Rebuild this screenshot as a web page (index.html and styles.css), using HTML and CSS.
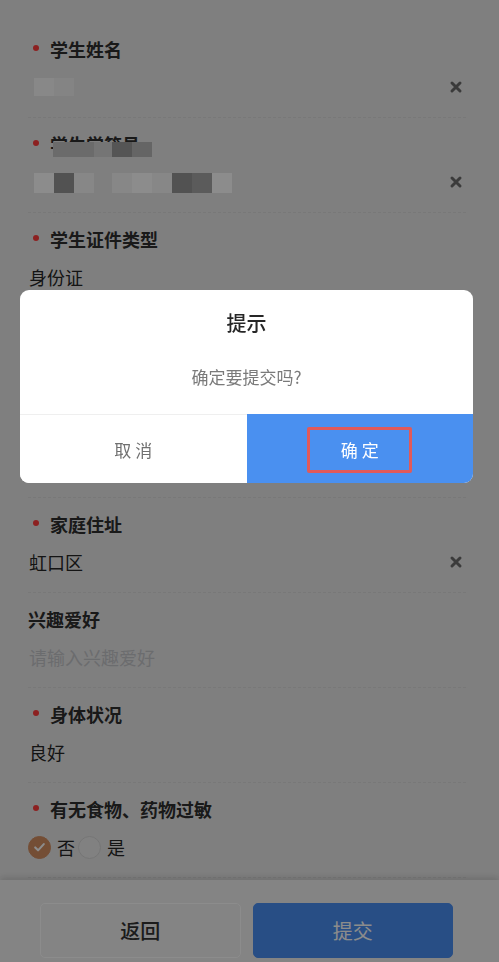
FILE: index.html
```html
<!DOCTYPE html>
<html lang="zh-CN">
<head>
<meta charset="utf-8">
<title>学生信息</title>
<link rel="stylesheet" href="styles.css">
</head>
<body>
<div class="page">
  <main class="form">
    <div class="field">
      <div class="label"><span class="req"><i></i></span>学生姓名</div>
      <div class="value">
        <span class="mosaic mosaic-sm"><i class="blk s1"></i><i class="blk s2"></i></span>
        <svg class="clear" viewBox="0 0 14 14"><path d="M3 3l8 8M11 3l-8 8"/></svg>
      </div>
    </div>
    <div class="field">
      <div class="label"><span class="req"><i></i></span><span class="redacted">学生学籍号<span class="mosaic mosaic-label"><i class="lb l1"></i><i class="lb l2"></i><i class="lb l3"></i><i class="lb l4"></i></span></span></div>
      <div class="value">
        <span class="mosaic mosaic-md">
          <i class="blk b1"></i><i class="blk bd"></i><i class="blk b2"></i><i class="gap"></i><i class="blk b2"></i><i class="blk b1"></i><i class="blk b2"></i><i class="blk bd"></i><i class="blk bd2"></i><i class="blk b1"></i>
        </span>
        <svg class="clear" viewBox="0 0 14 14"><path d="M3 3l8 8M11 3l-8 8"/></svg>
      </div>
    </div>
    <div class="field">
      <div class="label"><span class="req"><i></i></span>学生证件类型</div>
      <div class="value"><span class="text">身份证</span></div>
    </div>
    <div class="field">
      <div class="label"><span class="req"><i></i></span>学生证件号码</div>
      <div class="value"><span class="text">310109********0000</span></div>
    </div>
    <div class="field">
      <div class="label"><span class="req"><i></i></span>出生日期</div>
      <div class="value"><span class="text">2015-01-01</span></div>
    </div>
    <div class="field">
      <div class="label"><span class="req"><i></i></span>家庭住址</div>
      <div class="value">
        <span class="text">虹口区</span>
        <svg class="clear" viewBox="0 0 14 14"><path d="M3 3l8 8M11 3l-8 8"/></svg>
      </div>
    </div>
    <div class="field">
      <div class="label">兴趣爱好</div>
      <div class="value"><span class="text placeholder">请输入兴趣爱好</span></div>
    </div>
    <div class="field">
      <div class="label"><span class="req"><i></i></span>身体状况</div>
      <div class="value"><span class="text">良好</span></div>
    </div>
    <div class="field">
      <div class="label"><span class="req"><i></i></span>有无食物、药物过敏</div>
      <div class="value radios">
        <span class="radio">
          <span class="radio-icon checked"><svg viewBox="0 0 22 22"><path d="M6.5 11.5l3 3 6-6.5"/></svg></span>
          <span class="radio-label">否</span>
        </span>
        <span class="radio">
          <span class="radio-icon"></span>
          <span class="radio-label">是</span>
        </span>
      </div>
    </div>
  </main>
  <footer class="bar">
    <button class="btn btn-back">返回</button>
    <button class="btn btn-submit">提交</button>
  </footer>
</div>

<div class="mask"></div>
<div class="dialog">
  <div class="dialog-body">
    <div class="dialog-title">提示</div>
    <div class="dialog-message">确定要提交吗?</div>
  </div>
  <div class="dialog-actions">
    <button class="dlg-btn dlg-cancel">取 消</button>
    <button class="dlg-btn dlg-confirm"><span class="mark">确 定</span></button>
  </div>
</div>
</body>
</html>
```

FILE: styles.css
```css
* { box-sizing: border-box; }

html, body {
  margin: 0;
  padding: 0;
  height: 100%;
}

body {
  font-family: "Noto Sans CJK SC", "Noto Sans", "Liberation Sans", sans-serif;
  background: #e8e8e8;
  color: #323233;
  overflow: hidden;
}

.page {
  height: 100vh;
  display: flex;
  flex-direction: column;
}

.form {
  flex: 1;
  overflow: hidden;
  padding: 23px 33px 0 28px;
}

.field {
  padding: 14px 0 17px;
  border-bottom: 1px dashed #dadada;
}

.label {
  display: flex;
  align-items: center;
  height: 24px;
  line-height: 24px;
  font-size: 18px;
  font-weight: 700;
  color: #2e2e2e;
}

.req {
  width: 22px;
  height: 24px;
  display: flex;
  align-items: center;
  flex: none;
}

.req i {
  display: block;
  width: 6px;
  height: 6px;
  margin: -3px 0 0 5px;
  border-radius: 50%;
  background: #ff3c3c;
}

.redacted {
  position: relative;
}

.mosaic {
  display: flex;
}

.mosaic-label {
  position: absolute;
  left: 3px;
  top: 10px;
  height: 15px;
}

.lb { display: block; height: 15px; }
.l1 { width: 41px; background: #c4c4c4; }
.l2 { width: 18px; background: #d6d6d6; }
.l3 { width: 20px; background: #9c9c9c; }
.l4 { width: 20px; background: #b9b9b9; }

.value {
  margin-top: 13px;
  height: 26px;
  display: flex;
  align-items: center;
  justify-content: space-between;
  font-size: 18px;
  line-height: 26px;
  color: #262626;
}

.text { padding-left: 1px; }

.placeholder { color: #c4c5c8; }

.mosaic-sm { margin-left: 6px; height: 18px; margin-top: -1px; }
.mosaic-md { margin-left: 6px; height: 20px; margin-top: 2px; }

.blk { display: block; width: 20px; height: 100%; }
.s1 { background: #f8f8f8; }
.s2 { background: #f0f0f0; }
.b1 { background: #ffffff; }
.b2 { background: #f6f6f6; }
.bd { background: #959595; }
.bd2 { background: #a6a6a6; }
.gap { display: block; width: 18px; }

.clear {
  width: 14px;
  height: 14px;
  margin-right: 3px;
  flex: none;
}

.clear path {
  fill: none;
  stroke: #6c6c6c;
  stroke-width: 3;
  stroke-linecap: round;
}

.radios {
  justify-content: flex-start;
}

.radio {
  display: flex;
  align-items: center;
  margin-right: 3px;
}

.radio-icon {
  width: 23px;
  height: 23px;
  border-radius: 50%;
  border: 1px solid #d6d6d6;
  background: #ebebeb;
  display: flex;
  align-items: center;
  justify-content: center;
}

.radio-icon.checked {
  background: #d48f62;
  border-color: #d48f62;
}

.radio-icon svg {
  width: 22px;
  height: 22px;
}

.radio-icon svg path {
  fill: none;
  stroke: #ffffff;
  stroke-width: 2.2;
  stroke-linecap: round;
  stroke-linejoin: round;
}

.radio-label {
  margin-left: 6px;
  font-size: 18px;
  color: #262626;
}

.bar {
  flex: none;
  height: 82px;
  padding: 23px 46px 0 40px;
  display: flex;
  gap: 12px;
  align-items: flex-start;
  background: #f0f0f0;
  box-shadow: 0 -3px 6px rgba(0, 0, 0, 0.12);
}

.btn {
  flex: 1;
  height: 55px;
  border-radius: 5px;
  font-family: inherit;
  font-size: 20px;
  cursor: pointer;
}

.btn-back {
  background: #f0f0f0;
  border: 1px solid #ffffff;
  color: #333333;
  font-weight: 500;
}

.btn-submit {
  background: #4a8ff2;
  border: 1px solid #4a8ff2;
  color: #ffffff;
}

.mask {
  position: fixed;
  inset: 0;
  background: rgba(0, 0, 0, 0.45);
}

.dialog {
  position: fixed;
  left: 20px;
  top: 290px;
  width: 453px;
  background: #ffffff;
  border-radius: 9px;
  overflow: hidden;
}

.dialog-body {
  padding: 19px 16px 24px;
  text-align: center;
}

.dialog-title {
  font-size: 20px;
  line-height: 28px;
  font-weight: 500;
  color: #262626;
}

.dialog-message {
  margin-top: 27px;
  font-size: 17px;
  line-height: 26px;
  color: #7a7a7a;
}

.dialog-actions {
  display: flex;
  height: 69px;
  border-top: 1px solid #efefef;
}

.dlg-btn {
  flex: 1;
  border: 0;
  margin: 0;
  padding: 0;
  font-family: inherit;
  font-size: 17px;
  display: flex;
  align-items: center;
  justify-content: center;
  cursor: pointer;
}

.dlg-cancel {
  background: #ffffff;
  color: #707070;
}

.dlg-confirm {
  background: #4a90f0;
  color: #ffffff;
  margin-top: -1px;
}

.mark {
  width: 105px;
  height: 46px;
  display: flex;
  align-items: center;
  justify-content: center;
  border: 3px solid #e05a5a;
  border-radius: 2px;
  margin-top: 2px;
}
```
